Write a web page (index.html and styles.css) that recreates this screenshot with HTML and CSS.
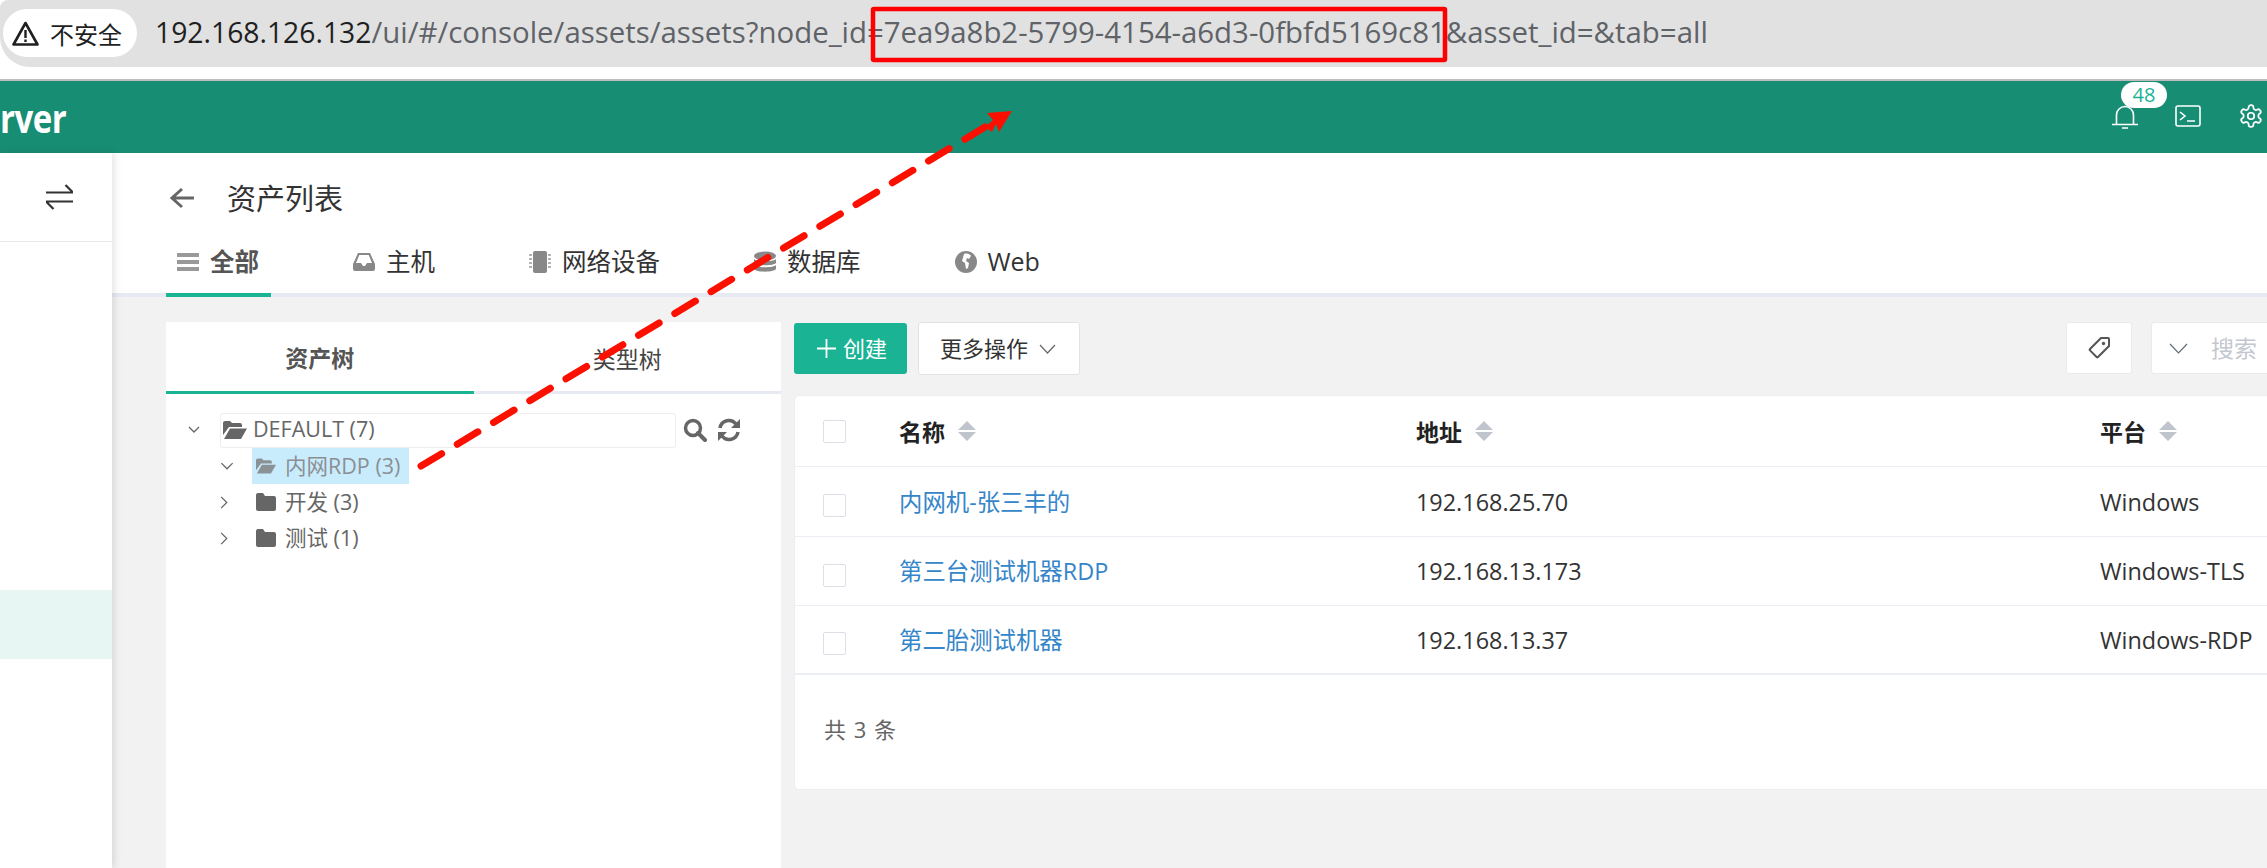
FILE: index.html
```html
<!DOCTYPE html>
<html lang="zh-CN">
<head>
<meta charset="utf-8">
<title>资产列表</title>
<link rel="stylesheet" href="styles.css">
</head>
<body>
<div class="page">
  <div class="addr">
    <div class="chip">
      <svg class="warn" viewBox="0 0 27 25"><path d="M13.5 2 25.5 23.5H1.5Z" fill="none" stroke="#1f1f1f" stroke-width="2.6" stroke-linejoin="round"/><path d="M13.5 9v8M13.5 18.5v2.4" stroke="#1f1f1f" stroke-width="2.4" fill="none"/></svg>
      <span>不安全</span>
    </div>
    <div class="url"><span class="host">192.168.126.132</span>/ui/#/console/assets/assets?node_id=7ea9a8b2-5799-4154-a6d3-0fbfd5169c81&amp;asset_id=&amp;tab=all</div>
  </div>
  <div class="gap"></div>
  <header class="nav">
    <div class="logo">rver</div>
    <div class="nav-icons">
      <div class="bell">
        <svg class="ico-bell" viewBox="0 0 26 24"><path d="M4.500 19V10a8.500 8.500 0 0 1 17 0v9M0 19.500h26M10 23h6" fill="none" stroke="#fff" stroke-width="1.600"/></svg>
        <span class="badge">48</span>
      </div>
      <svg class="ico-term" viewBox="0 0 26 22"><rect x="1" y="1" width="24" height="20" rx="2" fill="none" stroke="#fff" stroke-width="1.6"/><path d="M5 7l5 4-5 4M12 16h8" fill="none" stroke="#fff" stroke-width="1.6"/></svg>
      <svg class="ico-gear" viewBox="0 0 24 24" fill="none" stroke="#fff" stroke-width="1.6" stroke-linejoin="round"><path d="M12.2 2h-.4a2 2 0 0 0-2 2v.2a2 2 0 0 1-1 1.7l-.4.3a2 2 0 0 1-2 0l-.2-.1a2 2 0 0 0-2.7.7l-.2.4a2 2 0 0 0 .7 2.7l.2.1a2 2 0 0 1 1 1.7v.5a2 2 0 0 1-1 1.8l-.2.1a2 2 0 0 0-.7 2.7l.2.4a2 2 0 0 0 2.7.7l.2-.1a2 2 0 0 1 2 0l.4.3a2 2 0 0 1 1 1.7v.2a2 2 0 0 0 2 2h.4a2 2 0 0 0 2-2v-.2a2 2 0 0 1 1-1.7l.4-.3a2 2 0 0 1 2 0l.2.1a2 2 0 0 0 2.7-.7l.2-.4a2 2 0 0 0-.7-2.7l-.2-.1a2 2 0 0 1-1-1.8v-.5a2 2 0 0 1 1-1.7l.2-.1a2 2 0 0 0 .7-2.7l-.2-.4a2 2 0 0 0-2.7-.7l-.2.1a2 2 0 0 1-2 0l-.4-.3a2 2 0 0 1-1-1.7V4a2 2 0 0 0-2-2Z"/><circle cx="12" cy="12" r="3"/></svg>
    </div>
  </header>
  <div class="body">
    <aside class="side">
      <div class="side-top">
        <svg class="ico-swap" viewBox="0 0 27 26"><path d="M0 8.500h27L19.500 1M27 17.500H0L7.500 25" fill="none" stroke="#333" stroke-width="2.200"/></svg>
      </div>
      <div class="side-active"></div>
    </aside>
    <main class="main">
      <div class="head">
        <div class="title-row">
          <svg class="ico-back" viewBox="0 0 25 22"><path d="M24 11H3M12 2 2 11l10 9" fill="none" stroke="#666" stroke-width="3"/></svg>
          <h1 class="title">资产列表</h1>
        </div>
        <nav class="tabs">
          <div class="tab tab-on">
            <svg class="tab-ico" viewBox="0 0 22 22"><path d="M0 2h22v4H0zM0 9h22v4H0zM0 16h22v4H0z" fill="#999"/></svg>
            <span>全部</span>
          </div>
          <div class="tab">
            <svg class="tab-ico" viewBox="0 0 22 22"><path fill-rule="evenodd" d="M5 2h12l5 11v5a2 2 0 0 1-2 2H2a2 2 0 0 1-2-2v-5Zm1.300 2L3 12h5l2 3h2l2-3h5L15.700 4Z" fill="#888"/></svg>
            <span>主机</span>
          </div>
          <div class="tab">
            <svg class="tab-ico" viewBox="0 0 22 22"><rect x="4" y="0" width="14" height="22" rx="2" fill="#888"/><path d="M0 4h3M0 8h3M0 12h3M0 16h3M19 4h3M19 8h3M19 12h3M19 16h3" stroke="#999" stroke-width="1.500"/></svg>
            <span>网络设备</span>
          </div>
          <div class="tab">
            <svg class="tab-ico" viewBox="0 0 22 22"><ellipse cx="11" cy="5" rx="11" ry="4.500" fill="#888"/><path d="M0 8c2 3 20 3 22 0v4c-2 3-20 3-22 0ZM0 14c2 3 20 3 22 0v4c-2 3.500-20 3.500-22 0Z" fill="#888"/></svg>
            <span>数据库</span>
          </div>
          <div class="tab">
            <svg class="tab-ico" viewBox="0 0 22 22"><circle cx="11" cy="11" r="11" fill="#888"/><path d="M9 3c3-1 6 0 7 2l-2 3-2-1-1 3 3 2-1 5-2 1-1-6-3-2Z" fill="#fff"/></svg>
            <span class="tab-web">Web</span>
          </div>
        </nav>
      </div>
      <div class="content">
        <section class="tree-panel">
          <div class="tree-tabs">
            <div class="tree-tab tree-tab-on">资产树</div>
            <div class="tree-tab">类型树</div>
          </div>
          <div class="tree">
            <div class="tree-row tree-root">
              <svg class="caret-d" viewBox="0 0 12 8"><path d="M1 1l5 5 5-5" fill="none" stroke="#666" stroke-width="1.300"/></svg>
              <div class="root-box">
                <svg class="fold-open" viewBox="0 0 24 18"><path d="M0 2a2 2 0 0 1 2-2h5l2 2h8a2 2 0 0 1 2 2v2H6L0 14ZM7 7.500h17L18 18H1Z" fill="#666"/></svg>
                <span>DEFAULT (7)</span>
              </div>
              <svg class="tool-ico" viewBox="0 0 24 24"><circle cx="10" cy="10" r="7.500" fill="none" stroke="#666" stroke-width="3.500"/><path d="M15 15l7 7" stroke="#666" stroke-width="4" stroke-linecap="round"/></svg>
              <svg class="tool-ico tool-re" viewBox="0 0 24 24"><path d="M3 10A9 9 0 0 1 19 6M21 14A9 9 0 0 1 5 18" fill="none" stroke="#666" stroke-width="3.500"/><path d="M23 1v9h-9ZM1 23v-9h9Z" fill="#666"/></svg>
            </div>
            <div class="tree-row tree-child">
              <svg class="caret-d2" viewBox="0 0 12 8"><path d="M1 1l5 5 5-5" fill="none" stroke="#666" stroke-width="1.100"/></svg>
              <div class="node node-sel">
                <svg class="fold-open" viewBox="0 0 24 18"><path d="M0 2a2 2 0 0 1 2-2h5l2 2h8a2 2 0 0 1 2 2v2H6L0 14ZM7 7.500h17L18 18H1Z" fill="#8b9296"/></svg>
                <span>内网RDP (3)</span>
              </div>
            </div>
            <div class="tree-row tree-child">
              <svg class="caret-r" viewBox="0 0 8 12"><path d="M1 1l5 5-5 5" fill="none" stroke="#666" stroke-width="1.100"/></svg>
              <div class="node">
                <svg class="fold" viewBox="0 0 20 20"><path d="M0 3a2 2 0 0 1 2-2h5l2 3h9a2 2 0 0 1 2 2v11a2 2 0 0 1-2 2H2a2 2 0 0 1-2-2Z" fill="#666"/></svg>
                <span>开发 (3)</span>
              </div>
            </div>
            <div class="tree-row tree-child">
              <svg class="caret-r" viewBox="0 0 8 12"><path d="M1 1l5 5-5 5" fill="none" stroke="#666" stroke-width="1.100"/></svg>
              <div class="node">
                <svg class="fold" viewBox="0 0 20 20"><path d="M0 3a2 2 0 0 1 2-2h5l2 3h9a2 2 0 0 1 2 2v11a2 2 0 0 1-2 2H2a2 2 0 0 1-2-2Z" fill="#666"/></svg>
                <span>测试 (1)</span>
              </div>
            </div>
          </div>
        </section>
        <section class="right">
          <div class="toolbar">
            <button class="btn btn-create"><svg class="plus" viewBox="0 0 19 19"><path d="M9.500 0v19M0 9.500h19" stroke="#fff" stroke-width="1.800"/></svg><span>创建</span></button>
            <button class="btn btn-more"><span>更多操作</span><svg class="more-caret" viewBox="0 0 17 10"><path d="M1 1l7.500 8L16 1" fill="none" stroke="#666" stroke-width="1.200"/></svg></button>
            <div class="spacer"></div>
            <div class="tag-btn"><svg class="tag-ico" viewBox="0 0 22 22"><path d="M13 1h7a1 1 0 0 1 1 1v7L10 20a1 1 0 0 1-1.400 0L2 13.400A1 1 0 0 1 2 12Z" fill="none" stroke="#555" stroke-width="2"/><circle cx="15.500" cy="6.500" r="1.700" fill="#555"/></svg></div>
            <div class="search-box"><svg class="search-caret" viewBox="0 0 19 11"><path d="M1 1l8.500 9L18 1" fill="none" stroke="#606a78" stroke-width="1.200"/></svg><span>搜索</span></div>
          </div>
          <div class="card">
            <div class="t-row t-head">
              <div class="c-check"><span class="check"></span></div>
              <div class="c-name">名称<svg class="sort" viewBox="0 0 18 20"><path d="M9 0l9 9H0ZM9 20l9-9H0Z" fill="#c0c4cc"/></svg></div>
              <div class="c-addr">地址<svg class="sort" viewBox="0 0 18 20"><path d="M9 0l9 9H0ZM9 20l9-9H0Z" fill="#c0c4cc"/></svg></div>
              <div class="c-plat">平台<svg class="sort" viewBox="0 0 18 20"><path d="M9 0l9 9H0ZM9 20l9-9H0Z" fill="#c0c4cc"/></svg></div>
            </div>
            <div class="t-row t-r1">
              <div class="c-check"><span class="check check-low"></span></div>
              <div class="c-name"><a class="link">内网机-张三丰的</a></div>
              <div class="c-addr">192.168.25.70</div>
              <div class="c-plat">Windows</div>
            </div>
            <div class="t-row t-r2">
              <div class="c-check"><span class="check check-low"></span></div>
              <div class="c-name"><a class="link">第三台测试机器RDP</a></div>
              <div class="c-addr">192.168.13.173</div>
              <div class="c-plat">Windows-TLS</div>
            </div>
            <div class="t-row t-r3">
              <div class="c-check"><span class="check check-low"></span></div>
              <div class="c-name"><a class="link">第二胎测试机器</a></div>
              <div class="c-addr">192.168.13.37</div>
              <div class="c-plat">Windows-RDP</div>
            </div>
            <div class="t-foot">共 3 条</div>
          </div>
        </section>
      </div>
    </main>
  </div>
  <svg class="markup" viewBox="0 0 2267 868">
    <rect x="873" y="9" width="572" height="51" fill="none" stroke="#ff0000" stroke-width="4.500" rx="1"/>
    <path d="M421 466 L985 127" fill="none" stroke="#fb1000" stroke-width="7" stroke-linecap="round" stroke-dasharray="24 18.300"/>
    <path d="M1012 111 L987 113 L993 120 L985 127 L992 132 L996 124 L999 132Z" fill="#fb1000"/>
  </svg>
</div>
</body>
</html>
```
FILE: styles.css
```css
* { box-sizing: border-box; }
html, body { margin: 0; padding: 0; height: 100%; overflow: hidden; background: #fff; }
body { font-family: "Open Sans", "Noto Sans CJK SC", sans-serif; color: #333; }
.page { position: relative; width: 2267px; height: 868px; overflow: hidden; display: flex; flex-direction: column; }

.addr { height: 67px; background: #e1e1e1; border-radius: 8px 0 0 30px; display: flex; align-items: center; flex: none; }
.chip { margin-left: 3px; width: 134px; height: 48px; margin-top: -1px; background: #fff; border-radius: 24px; display: flex; align-items: center; padding-left: 9px; gap: 11px; font-size: 24px; color: #1f1f1f; }
.warn { width: 27px; height: 25px; flex: none; }
.url { margin-left: 18px; margin-top: -3px; font-size: 29.400px; color: #5f6368; white-space: nowrap; }
.host { color: #1f1f1f; font-size: 28.300px; }
.gap { height: 12px; flex: none; background: #fff; }

.nav { height: 74px; flex: none; background: #178e74; border-top: 2px solid #bdbdbd; display: flex; align-items: center; justify-content: space-between; }
.logo { font-size: 33px; font-weight: 700; letter-spacing: -.5px; color: #fff; line-height: 1; margin-top: 1px; transform: scaleY(1.2); }
.nav-icons { display: flex; align-items: flex-start; height: 72px; padding-right: 3px; }
.bell { position: relative; width: 26px; height: 24px; margin-top: 24px; }
.ico-bell { width: 26px; height: 24px; display: block; }
.badge { position: absolute; left: 9px; top: -23px; width: 46px; height: 26px; background: #fff; border-radius: 13px; color: #1ab394; font-size: 20px; line-height: 26px; text-align: center; }
.ico-term { width: 26px; height: 22px; margin: 24px 0 0 37px; flex: none; }
.ico-gear { width: 26px; height: 26px; margin: 22px 0 0 37px; flex: none; }

.body { flex: 1; min-height: 0; display: flex; }
.side { width: 112px; flex: none; background: #fff; box-shadow: 2px 0 8px rgba(0, 0, 0, .12); position: relative; z-index: 1; }
.side-top { height: 89px; border-bottom: 1px solid #eaeaea; display: flex; align-items: center; justify-content: flex-end; padding-right: 39px; }
.ico-swap { width: 27px; height: 26px; }
.side-active { margin-top: 348px; height: 69px; background: #e7f6f2; }

.main { flex: 1; min-width: 0; display: flex; flex-direction: column; background: #f2f2f3; }
.head { background: #fff; flex: none; height: 144px; padding-left: 54px; border-bottom: 4px solid #e7eaf3; }
.title-row { height: 90px; display: flex; align-items: center; padding-left: 4px; }
.ico-back { width: 25px; height: 22px; flex: none; }
.title { margin: -3px 0 0 32px; font-size: 29px; font-weight: 400; color: #333; }
.tabs { display: flex; gap: 71px; height: 54px; }
.tab { height: 54px; padding: 0 12px 16px 11px; display: flex; align-items: center; gap: 11px; font-size: 24.500px; color: #333; }
.tab span { margin-top: -3px; }
.tab-on { font-weight: 700; color: #555; border-bottom: 4px solid #1ab394; padding-bottom: 12px; }
.tab-ico { width: 22px; height: 22px; flex: none; }
.tab-web { font-size: 25px; }

.content { flex: 1; min-height: 0; display: flex; padding: 25px 0 0 54px; gap: 13px; }
.tree-panel { width: 615px; flex: none; background: #fff; }
.tree-tabs { display: flex; height: 72px; border-bottom: 3px solid #e7eaf3; }
.tree-tab { flex: 1; height: 72px; display: flex; align-items: center; justify-content: center; font-size: 23px; color: #444; }
.tree-tab-on { font-weight: 700; color: #555; border-bottom: 3px solid #1ab394; }
.tree { padding: 18px 0 0 22px; font-size: 21.500px; color: #666; }
.tree-row { display: flex; align-items: center; height: 36px; }
.tree-root { height: 36px; }
.caret-d { width: 12px; height: 8px; flex: none; margin-right: 20px; }
.root-box { width: 456px; height: 35px; border: 1px solid #eee; border-radius: 3px; display: flex; align-items: center; padding-left: 2px; gap: 6px; }
.root-box span, .node span { margin-top: -3px; }
.tool-ico { width: 24px; height: 24px; flex: none; margin-left: 7px; }
.tool-re { margin-left: 10px; }
.tree-child { padding-left: 32px; }
.caret-d2 { width: 14px; height: 9px; flex: none; margin-right: 18px; }
.caret-r { width: 9px; height: 15px; flex: none; margin-right: 23px; }
.node { height: 36px; display: flex; align-items: center; padding: 0 9px 0 4px; gap: 9px; }
.node-sel { background: #c9ecfd; color: #8b8f94; padding-right: 9px; }
.fold-open { width: 24px; height: 18px; flex: none; }
.node .fold-open { width: 20px; height: 16px; }
.fold { width: 20px; height: 20px; flex: none; }

.right { flex: 1; min-width: 0; }
.toolbar { display: flex; align-items: flex-start; height: 73px; }
.btn { height: 51px; border-radius: 3px; font-family: inherit; font-size: 22px; display: flex; align-items: center; padding: 0; }
.btn span { margin-top: -3px; }
.btn-create { width: 113px; margin-top: 1px; background: #1ab394; border: 0; color: #fff; padding-left: 23px; gap: 7px; }
.plus { width: 19px; height: 19px; }
.btn-more { width: 162px; height: 53px; margin-left: 11px; background: #fff; border: 1px solid #e3e3e6; color: #333; padding-left: 21px; gap: 11px; }
.more-caret { width: 17px; height: 10px; }
.spacer { flex: 1; }
.tag-btn { width: 66px; height: 52px; background: #fff; border: 1px solid #ebebee; border-radius: 3px; display: flex; align-items: center; justify-content: center; }
.tag-ico { width: 22px; height: 22px; }
.search-box { width: 136px; height: 52px; margin: 0 -20px 0 19px; background: #fff; border: 1px solid #ebebee; border-radius: 3px; display: flex; align-items: center; padding-left: 17px; gap: 23px; font-size: 23px; color: #c4c7cf; flex: none; }
.search-box span { margin-top: -2px; }
.search-caret { width: 19px; height: 11px; flex: none; }

.card { width: 1480px; height: 395px; background: #fff; border: 1px solid #edeef2; border-radius: 5px; font-size: 23.400px; color: #333; }
.t-row { display: flex; align-items: center; border-bottom: 1px solid #ebeef5; }
.t-head { height: 71px; font-weight: 700; color: #222; font-size: 23px; }
.t-r1 { height: 70px; }
.t-r2 { height: 69px; }
.t-r3 { height: 69px; border-bottom-width: 2px; }
.c-check { width: 104px; flex: none; padding-left: 28px; display: flex; }
.check { width: 23px; height: 23px; border: 1px solid #dcdfe6; border-radius: 2px; background: #fff; }
.check-low { margin-top: 8px; }
.c-name { width: 517px; flex: none; display: flex; align-items: center; }
.c-addr { width: 684px; flex: none; display: flex; align-items: center; }
.c-plat { flex: 1; display: flex; align-items: center; }
.sort { width: 18px; height: 20px; margin-left: 13px; flex: none; }
.link { color: #3585c9; margin-top: -2px; }
.t-foot { padding: 37px 0 0 29px; color: #666; font-size: 22px; word-spacing: 2px; }

.markup { position: absolute; left: 0; top: 0; width: 2267px; height: 868px; z-index: 5; pointer-events: none; }
```
